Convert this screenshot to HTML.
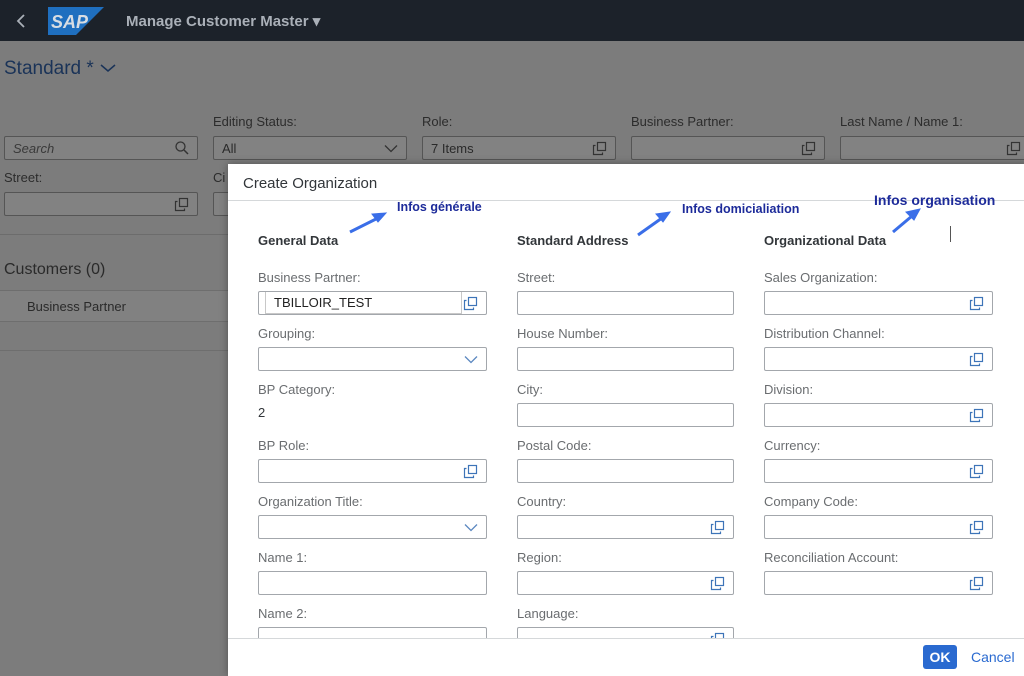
<!DOCTYPE html>
<html><head><meta charset="utf-8"><style>
*{box-sizing:border-box;margin:0;padding:0}
body{width:1024px;height:674px;overflow:hidden;position:relative;background:#7c7c7c;font-family:"Liberation Sans",sans-serif;font-size:13px}
.a{position:absolute}
.shell{left:0;top:0;width:1024px;height:41px;background:#1c222a}
.bgin{position:absolute;height:24px;border:1px solid #555;background:#828282;border-radius:2px;color:#2a2a2a;padding:4px 8px;font-size:13px}
.bglab{position:absolute;color:#2c2c2c;font-size:13px}
.dlg{left:228px;top:164px;width:800px;height:512px;background:#fff;box-shadow:0 0 8px rgba(0,0,0,.35)}
.lab{position:absolute;color:#6a6d70;font-size:13px}
.inp{position:absolute;height:24px;border:1px solid #a3a7ac;border-radius:2px;background:#fff}
.h{position:absolute;font-weight:bold;color:#32363a;font-size:13px}
.ann{position:absolute;color:#1d2b9a;font-weight:bold;font-size:12.5px}
.vh{position:absolute;right:8px;top:4px}
</style></head><body>
<div class="a shell"></div>
<svg class="a" style="left:16px;top:13px" width="10" height="16"><path d="M8 2 L2 8 L8 14" stroke="#aab0b8" stroke-width="1.8" fill="none"/></svg>
<svg class="a" style="left:48px;top:7px" width="56" height="28"><polygon points="0,0 56,0 28,28 0,28" fill="#1f6fbf"/><text x="3" y="21" font-family="Liberation Sans" font-weight="bold" font-size="18" fill="#d8dde3" font-style="italic">SAP</text></svg>
<div class="a" style="left:126px;top:12px;color:#aab0b8;font-weight:bold;font-size:15px">Manage Customer Master ▾</div>
<div class="a" style="left:4px;top:58px;color:#1a3358;font-size:19px">Standard *</div>
<svg class="a" style="left:100px;top:63px" width="16" height="10"><path d="M1 2 L8 8 L15 2" stroke="#1a3358" stroke-width="1.5" fill="none"/></svg>
<div class="bglab" style="left:213px;top:114px">Editing Status:</div>
<div class="bglab" style="left:422px;top:114px">Role:</div>
<div class="bglab" style="left:631px;top:114px">Business Partner:</div>
<div class="bglab" style="left:840px;top:114px">Last Name / Name 1:</div>
<div id="bg"></div>
<div class="bglab" style="left:4px;top:170px">Street:</div>
<div class="bglab" style="left:213px;top:170px">Ci</div>
<div class="a" style="left:0;top:234px;width:228px;height:1px;background:#6c6c6c"></div>
<div class="a" style="left:4px;top:261px;color:#2a2a2a;font-size:16px">Customers (0)</div>
<div class="a" style="left:0;top:290px;width:228px;height:32px;background:#818181;border-top:1px solid #6e6e6e;border-bottom:1px solid #6e6e6e"></div>
<div class="a" style="left:27px;top:299px;color:#2a2a2a">Business Partner</div>
<div class="a" style="left:0;top:350px;width:228px;height:1px;background:#6e6e6e"></div>

<div class="a dlg">
<div class="a" style="left:15px;top:11px;font-size:15px;color:#32363a">Create Organization</div>
<div class="a" style="left:0;top:36px;width:800px;height:1px;background:#d5d8da"></div>
<div class="a" style="left:722px;top:62px;width:1px;height:16px;background:#555"></div>
</div>
<div id="f"></div>
<div class="ann" style="left:397px;top:200px">Infos générale</div>
<div class="ann" style="left:682px;top:202px">Infos domicialiation</div>
<div class="ann" style="left:874px;top:192px;font-size:14px">Infos organisation</div>
<svg class="a" style="left:0;top:0" width="1024" height="674"><g stroke="#3a6ee8" stroke-width="3" fill="#3a6ee8">
<line x1="350" y1="232" x2="378" y2="218"/><polygon points="386,213 372,214 378,222" stroke-width="1"/>
<line x1="638" y1="235" x2="662" y2="218"/><polygon points="670,212 656,214 663,222" stroke-width="1"/>
<line x1="893" y1="232" x2="912" y2="216"/><polygon points="920,209 906,212 914,220" stroke-width="1"/>
</g></svg>
<div class="h" style="left:258px;top:233px">General Data</div>
<div class="h" style="left:517px;top:233px">Standard Address</div>
<div class="h" style="left:764px;top:233px">Organizational Data</div>
<script>
const vhc=c=>`<svg class="vh" width="15" height="15" viewBox="0 0 15 15"><rect x="5.5" y="1.5" width="8" height="8" fill="none" stroke="${c}" stroke-width="1.2"/><path d="M3.5 4.5 H1.5 V13.5 H10.5 V11.5" fill="none" stroke="${c}" stroke-width="1.2"/></svg>`;
const vh=vhc('#3d74b8');
const ddc=c=>`<svg style="position:absolute;right:8px;top:7px" width="14" height="9"><path d="M1 1.5 L7 7.5 L13 1.5" stroke="${c}" stroke-width="1.3" fill="none"/></svg>`;
const dd=ddc('#5c88c0');
let b='';
b+=`<div class="bgin" style="left:4px;top:136px;width:194px;font-style:italic;color:#3a3a3a">Search<svg style="position:absolute;right:8px;top:4px" width="14" height="14"><circle cx="5.5" cy="5.5" r="4.5" stroke="#333" stroke-width="1.3" fill="none"/><path d="M9 9 L13 13" stroke="#333" stroke-width="1.5"/></svg></div>`;
b+=`<div class="bgin" style="left:213px;top:136px;width:194px">All${ddc('#333')}</div>`;
b+=`<div class="bgin" style="left:422px;top:136px;width:194px">7 Items${vhc('#333')}</div>`;
b+=`<div class="bgin" style="left:631px;top:136px;width:194px">${vhc('#333')}</div>`;
b+=`<div class="bgin" style="left:840px;top:136px;width:190px">${vhc('#333')}</div>`;
b+=`<div class="bgin" style="left:4px;top:192px;width:194px">${vhc('#333')}</div>`;
b+=`<div class="bgin" style="left:213px;top:192px;width:20px"></div>`;
document.getElementById('bg').innerHTML=b;
const cols=[[258,229,[["Business Partner:","bp"],["Grouping:","d"],["BP Category:","t"],["BP Role:","v"],["Organization Title:","d"],["Name 1:",""],["Name 2:",""]]],
[517,217,[["Street:",""],["House Number:",""],["City:",""],["Postal Code:",""],["Country:","v"],["Region:","v"],["Language:","v"]]],
[764,229,[["Sales Organization:","v"],["Distribution Channel:","v"],["Division:","v"],["Currency:","v"],["Company Code:","v"],["Reconciliation Account:","v"]]]];
let h='';
for(const [x,w,rows] of cols){rows.forEach(([l,t],i)=>{const y=270+i*56;
h+=`<div class="lab" style="left:${x}px;top:${y}px">${l}</div>`;
if(t=='t'){h+=`<div class="a" style="left:${x}px;top:${y+136-113}px;color:#32363a">2</div>`;return;}
let inner=t=='v'?vh:t=='d'?dd:'';
if(t=='bp')inner='<div style="position:absolute;left:6px;top:-1px;width:197px;height:23px;border:1px solid #c8c8c8;background:#fff;padding:3px 8px;color:#222">TBILLOIR_TEST</div>'+vh;
h+=`<div class="inp" style="left:${x}px;top:${y+21}px;width:${w}px;height:24px;overflow:hidden">${inner}</div>`;});}
document.getElementById('f').innerHTML=h;
</script>
<div class="a" style="left:228px;top:638px;width:800px;height:36px;background:#fff;border-top:1px solid #d5d8da"></div>
<div class="a" style="left:923px;top:645px;width:34px;height:24px;background:#2a6ad0;border-radius:3px;color:#fff;font-weight:bold;font-size:14px;text-align:center;line-height:24px">OK</div>
<div class="a" style="left:971px;top:649px;color:#2a6ad0;font-size:14px">Cancel</div>
</body></html>
